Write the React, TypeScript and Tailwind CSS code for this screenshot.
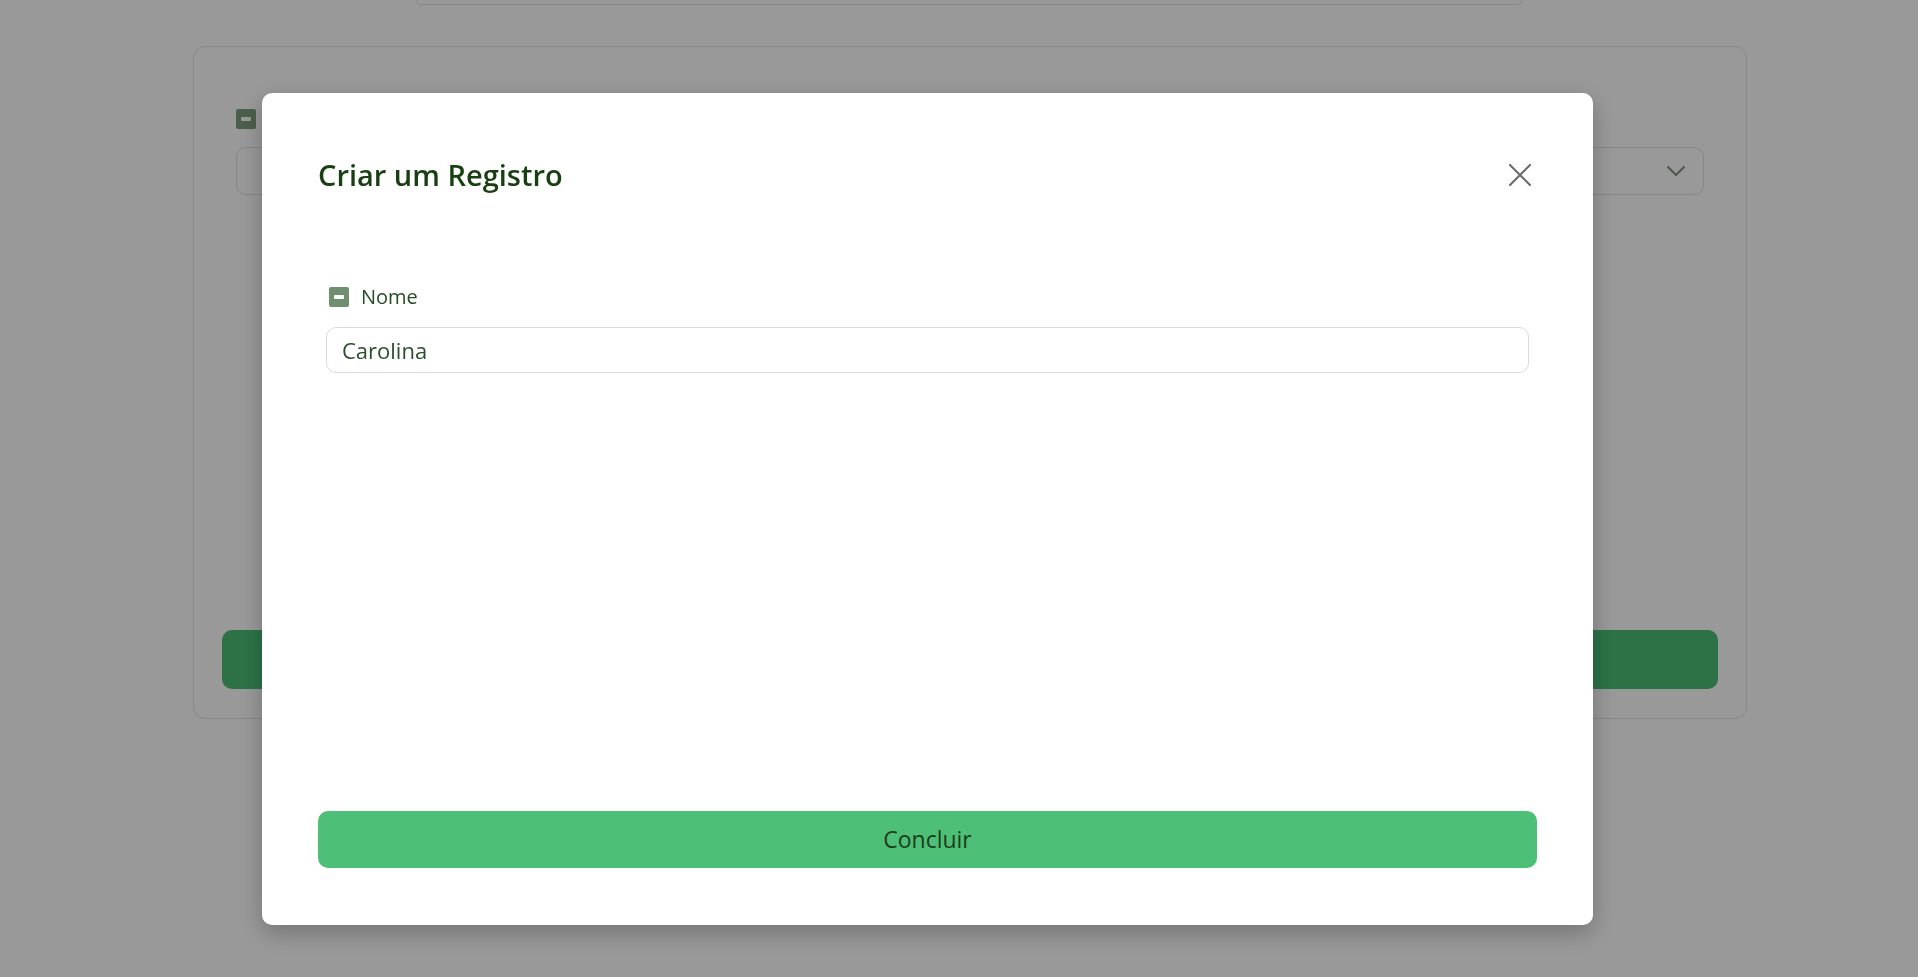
import { useState } from "react"

function MinusBox({ className }: { className?: string }) {
    return (
        <span className={`flex items-center justify-center w-[20px] h-[20px] rounded-[2px] ${className}`}>
            <span className="block w-[10px] h-[4px] bg-white rounded-[1px]" />
        </span>
    )
}

function Background() {
    return (
        <div className="min-h-screen bg-white">
            <div className="ml-[416px] w-[1107px] h-[5px] border-x border-b border-[#e3e3e3] rounded-b-[10px]" />

            <div className="ml-[193px] mt-[41px] w-[1554px] h-[673px] border border-[#e3e3e3] rounded-[12px] px-[28px] pb-[29px] flex flex-col">
                <div className="px-[14px] pt-[62px]">
                    <div className="flex items-center gap-[10px] h-[20px]">
                        <MinusBox className="bg-[#7e9c7e]" />
                        <span className="text-[20px] font-medium text-[#2e4f2e]">Nome</span>
                    </div>
                    <div className="mt-[18px] h-[48px] border border-[#e0e0e0] rounded-[10px] flex items-center justify-end pr-[18px]">
                        <svg width="18" height="10" viewBox="0 0 18 10" fill="none">
                            <path d="M1 1l8 8 8-8" stroke="#7d8f7d" strokeWidth="1.8" strokeLinecap="round" strokeLinejoin="round" />
                        </svg>
                    </div>
                </div>
                <div className="mt-auto h-[59px] rounded-[10px] bg-[#4bbf77]" />
            </div>
        </div>
    )
}

function App() {
    const [nome, setNome] = useState("Carolina")

    return (
        <div className="relative font-['Open_Sans',sans-serif]">
            <Background />

            <div className="fixed inset-0 bg-black/40 pl-[262px] pt-[93px]">
                <div className="w-[1331px] h-[832px] bg-white rounded-[10px] shadow-[0_8px_24px_rgba(0,0,0,0.25)] px-[56px] pt-[62px] pb-[57px] flex flex-col">
                    <div className="flex items-center justify-between">
                        <h2 className="text-[29px] leading-[40px] font-semibold text-[#183f12]">Criar um Registro</h2>
                        <button className="mr-[5px] w-[24px] h-[24px] flex items-center justify-center">
                            <svg width="22" height="22" viewBox="0 0 22 22" fill="none">
                                <path d="M1 1l20 20M21 1L1 21" stroke="#6e6e6e" strokeWidth="2.2" strokeLinecap="round" />
                            </svg>
                        </button>
                    </div>

                    <div className="px-[8px] mt-[92px]">
                        <div className="flex items-center gap-[12px] pl-[3px] h-[20px]">
                            <MinusBox className="bg-[#6f8f6f]" />
                            <span className="text-[20px] leading-[20px] font-medium text-[#274a27]">Nome</span>
                        </div>
                        <input
                            value={nome}
                            onChange={(e) => setNome(e.target.value)}
                            className="mt-[20px] w-full h-[46px] border-[1.5px] border-[#d8dcd8] rounded-[10px] px-[15px] text-[22px] text-[#2d4d2d] outline-none"
                        />
                    </div>

                    <button className="mt-auto h-[57px] rounded-[10px] bg-[#4dbf77] text-[23px] text-[#1d3d1d]">
                        Concluir
                    </button>
                </div>
            </div>
        </div>
    )
}

export default App
